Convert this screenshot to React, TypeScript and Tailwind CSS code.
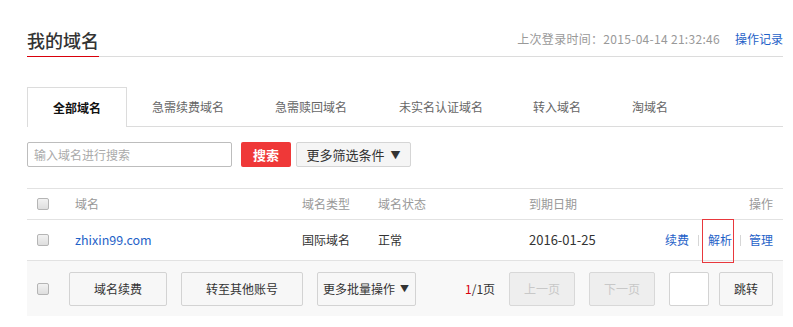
import React from 'react';

const tabs = [
  { label: '急需续费域名', w: 'w-[122px]' },
  { label: '急需赎回域名', w: 'w-[124px]' },
  { label: '未实名认证域名', w: 'w-[136px]' },
  { label: '转入域名', w: 'w-[96px]' },
  { label: '淘域名', w: 'w-[90px]' },
];

const Checkbox: React.FC = () => (
  <span className="block w-[12px] h-[12px] rounded-[2px] border border-[#b5b5b5] bg-[linear-gradient(#f2f2f2,#dedede)]" />
);

const cols = 'grid grid-cols-[48px_227px_76px_151px_1fr_auto] items-center';

export default function App() {
  return (
    <div
      className="w-[793px] h-[327px] bg-white text-[12px] text-[#333]"
      style={{ fontFamily: '"Noto Sans CJK SC", "Noto Sans", sans-serif' }}
    >
      <div className="ml-[27px] w-[756px]">
        {/* 标题 */}
        <div className="pt-[28px] flex items-end justify-between border-b border-[#dcdcdc]">
          <h1 className="text-[18px] leading-[24px] pb-[4px] border-b border-[#d9000b] -mb-px font-medium text-[#333]">
            我的域名
          </h1>
          <div className="pb-[9px] leading-[16px] flex items-center">
            <span className="text-[#999] tracking-[0.3px]">上次登录时间：2015-04-14 21:32:46</span>
            <a className="ml-[15px] text-[#1f62c8]">操作记录</a>
          </div>
        </div>

        {/* 标签 */}
        <div className="mt-[30px] flex border-b border-[#dcdcdc] h-[40px]">
          <div className="w-[100px] h-[40px] -mb-px flex items-center justify-center bg-white border border-b-0 border-[#dcdcdc] font-bold text-[#111]">
            全部域名
          </div>
          {tabs.map((t) => (
            <div key={t.label} className={`${t.w} h-[39px] flex items-center justify-center text-[#666]`}>
              {t.label}
            </div>
          ))}
        </div>

        {/* 搜索 */}
        <div className="mt-[15px] flex items-center h-[25px]">
          <div className="w-[205px] h-[25px] border border-[#bdbdbd] rounded-[2px] flex items-center pl-[6px] text-[#aaa]">
            输入域名进行搜索
          </div>
          <button className="ml-[9px] w-[50px] h-[25px] rounded-[2px] bg-[#ef3838] text-white text-[13px] font-bold flex items-center justify-center">
            搜索
          </button>
          <button className="ml-[5px] w-[115px] h-[25px] rounded-[2px] border border-[#d5d5d5] bg-[#f5f5f5] text-[#333] text-[13px] flex items-center justify-center">
            更多筛选条件
            <span className="ml-[6px] text-[10px]">▼</span>
          </button>
        </div>

        {/* 表格 */}
        <div className="mt-[21px] border-t border-[#e2e2e2]">
          <div className={`${cols} h-[31px] border-b border-[#e2e2e2] text-[#999]`}>
            <div className="pl-[10px]">
              <Checkbox />
            </div>
            <div>域名</div>
            <div>域名类型</div>
            <div>域名状态</div>
            <div>到期日期</div>
            <div className="text-right pr-[10px]">操作</div>
          </div>
          <div className={`${cols} h-[41px] border-b border-[#e2e2e2]`}>
            <div className="pl-[10px]">
              <Checkbox />
            </div>
            <div className="text-[#1f62c8] text-[12.5px]">zhixin99.com</div>
            <div>国际域名</div>
            <div>正常</div>
            <div className="text-[13px]">2016-01-25</div>
            <div className="flex justify-end items-center pr-[10px] text-[#1f62c8]">
              <a>续费</a>
              <span className="inline-block w-px h-[11px] bg-[#d6d6d6] mx-[9px]" />
              <span className="relative">
                <a>解析</a>
                <span className="absolute left-[-6px] right-[-2px] top-[-12px] bottom-[-14px] border border-[#e8383d]" />
              </span>
              <span className="inline-block w-px h-[11px] bg-[#d6d6d6] mx-[8px]" />
              <a>管理</a>
            </div>
          </div>

          {/* 底部操作 */}
          <div className="h-[55px] bg-[#f8f8f8] flex items-center pl-[10px]">
            <Checkbox />
            <button className="ml-[20px] w-[98px] h-[34px] rounded-[2px] border border-[#d3d3d3] bg-[#f7f7f7] text-[#333]">
              域名续费
            </button>
            <button className="ml-[14px] w-[122px] h-[34px] rounded-[2px] border border-[#d3d3d3] bg-[#f7f7f7] text-[#333]">
              转至其他账号
            </button>
            <div className="ml-[14px] w-[99px] h-[34px] rounded-[2px] border border-[#d3d3d3] bg-[#f7f7f7] text-[#333] flex items-center justify-between pl-[5px] pr-[6px]">
              <span>更多批量操作</span>
              <span className="text-[9px]">▼</span>
            </div>
            <div className="ml-[49px] w-[44px]">
              <span className="text-[#d9000b]">1</span>/1页
            </div>
            <button className="w-[66px] h-[34px] rounded-[2px] border border-[#d8d8d8] bg-[#eeeeee] text-[#c8c8c8]">
              上一页
            </button>
            <button className="ml-[14px] w-[66px] h-[34px] rounded-[2px] border border-[#d8d8d8] bg-[#eeeeee] text-[#c8c8c8]">
              下一页
            </button>
            <div className="ml-[14px] w-[40px] h-[34px] rounded-[2px] border border-[#d3d3d3] bg-white" />
            <button className="ml-[10px] w-[54px] h-[34px] rounded-[2px] border border-[#d3d3d3] bg-[#f7f7f7] text-[#333]">
              跳转
            </button>
          </div>
        </div>
      </div>
    </div>
  );
}
